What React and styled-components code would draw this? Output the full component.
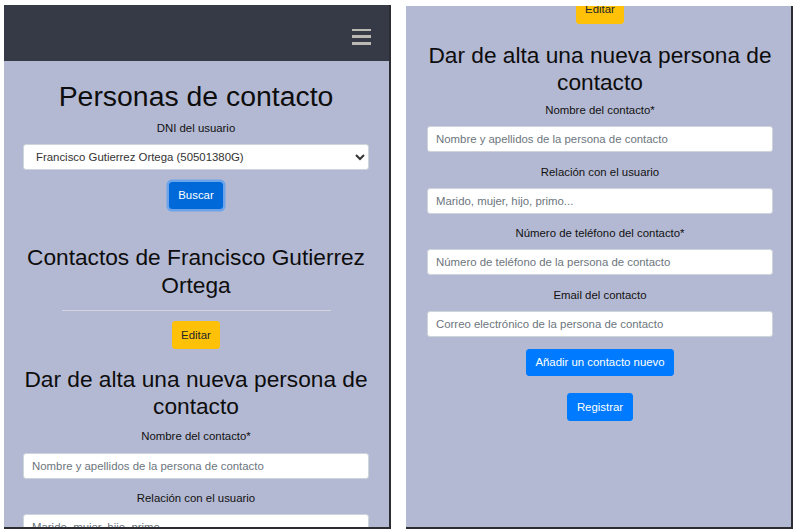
import React from "react";
import styled, { createGlobalStyle } from "styled-components";

const GlobalStyle = createGlobalStyle`
  body {
    margin: 0;
    background: #fff;
    font-family: "Liberation Sans", Arial, sans-serif;
    color: #111;
  }
`;

const Page = styled.div`
  display: flex;
  align-items: flex-start;
  gap: 15px;
  padding: 5px 0 0 4px;
`;

const Screen = styled.div`
  box-sizing: border-box;
  width: 387px;
  height: ${(p) => p.$h}px;
  margin-top: ${(p) => p.$top || 0}px;
  background: #b4b9d3;
  border-right: 2px solid #2c2d33;
  border-bottom: 2px solid #2c2d33;
  overflow: hidden;
`;

// ========== barra superior ==========

const Navbar = styled.nav`
  height: 56px;
  background: #363a46;
  display: flex;
  justify-content: flex-end;
  align-items: flex-start;
  padding: 23.5px 18px 0 0;
  box-sizing: border-box;
`;

const Toggler = styled.button`
  border: 0;
  padding: 0;
  background: transparent;
  display: flex;
  flex-direction: column;
  gap: 4.3px;
`;

const Bar = styled.span`
  display: block;
  width: 19px;
  height: 2.7px;
  background: #bab9b2;
`;

// ========== contenido ==========

const Content = styled.div`
  display: flex;
  flex-direction: column;
  align-items: stretch;
  text-align: center;
  padding: 0 ${(p) => p.$right}px 0 ${(p) => p.$left}px;
`;

const Title = styled.h1`
  margin: 17.5px 0 0;
  font-size: 28.4px;
  font-weight: 400;
  line-height: 1.2;
  color: #0d0d0d;
`;

const Heading = styled.h2`
  margin: ${(p) => p.$mt}px 0 ${(p) => p.$mb}px;
  font-size: 22.7px;
  font-weight: 400;
  line-height: 1.2;
  color: #0d0d0d;
`;

const Label = styled.label`
  display: block;
  margin: ${(p) => p.$mt || 0}px 0 7px;
  font-size: 11.4px;
  line-height: 17.1px;
  color: #111;
`;

const FormGroup = styled.div`
  display: flex;
  flex-direction: column;
  margin-bottom: 11.5px;
`;

const Field = styled.input`
  box-sizing: border-box;
  width: 100%;
  height: 26px;
  padding: 0 8px;
  border: 1px solid #ced4da;
  border-radius: 3px;
  background: #fff;
  font-family: "Liberation Sans", Arial, sans-serif;
  font-size: 11.4px;
  color: #495057;
  outline: none;

  &::placeholder {
    color: #6c757d;
  }
`;

const Select = styled.select`
  box-sizing: border-box;
  width: 100%;
  height: 26px;
  padding: 0 8px;
  border: 1px solid #ced4da;
  border-radius: 3px;
  background: #fff;
  font-family: "Liberation Sans", Arial, sans-serif;
  font-size: 11.4px;
  color: #333;
`;

const colors = {
  primary: { bg: "#007bff", fg: "#fff" },
  active: { bg: "#0069d9", fg: "#fff" },
  warning: { bg: "#ffc107", fg: "#212529" },
};

const Button = styled.button`
  align-self: center;
  width: fit-content;
  margin-top: ${(p) => p.$mt}px;
  padding: 4.3px 8.5px;
  border: 1px solid ${(p) => colors[p.$variant].bg};
  border-radius: 3px;
  background: ${(p) => colors[p.$variant].bg};
  color: ${(p) => colors[p.$variant].fg};
  font-family: "Liberation Sans", Arial, sans-serif;
  font-size: 11.4px;
  line-height: 17.1px;
  box-shadow: ${(p) => (p.$focus ? "0 0 0 2.5px rgba(38, 143, 255, 0.5)" : "none")};
`;

const Divider = styled.hr`
  align-self: center;
  width: 269px;
  margin: 11.5px 0 0;
  border: 0;
  border-top: 1px solid #d3d5df;
`;

function ContactForm() {
  return (
    <>
      <FormGroup>
        <Label>Nombre del contacto*</Label>
        <Field placeholder="Nombre y apellidos de la persona de contacto" />
      </FormGroup>
      <FormGroup>
        <Label>Relación con el usuario</Label>
        <Field placeholder="Marido, mujer, hijo, primo..." />
      </FormGroup>
      <FormGroup>
        <Label>Número de teléfono del contacto*</Label>
        <Field placeholder="Número de teléfono de la persona de contacto" />
      </FormGroup>
      <FormGroup>
        <Label>Email del contacto</Label>
        <Field placeholder="Correo electrónico de la persona de contacto" />
      </FormGroup>
    </>
  );
}

export default function App() {
  return (
    <>
      <GlobalStyle />
      <Page>
        <Screen $h={524}>
          <Navbar>
            <Toggler aria-label="menu">
              <Bar />
              <Bar />
              <Bar />
            </Toggler>
          </Navbar>
          <Content $left={19} $right={20}>
            <Title>Personas de contacto</Title>
            <Label $mt={7}>DNI del usuario</Label>
            <Select defaultValue="50501380G">
              <option value="50501380G">Francisco Gutierrez Ortega (50501380G)</option>
            </Select>
            <Button $variant="active" $focus $mt={12}>Buscar</Button>
            <Heading $mt={35} $mb={0}>Contactos de Francisco Gutierrez Ortega</Heading>
            <Divider />
            <Button $variant="warning" $mt={10}>Editar</Button>
            <Heading $mt={17} $mb={8}>Dar de alta una nueva persona de contacto</Heading>
            <ContactForm />
          </Content>
        </Screen>

        <Screen $h={523} $top={1}>
          <Content $left={21} $right={18}>
            <Button $variant="warning" $mt={-10}>Editar</Button>
            <Heading $mt={18} $mb={6}>Dar de alta una nueva persona de contacto</Heading>
            <ContactForm />
            <Button $variant="primary" $mt={0}>Añadir un contacto nuevo</Button>
            <Button $variant="primary" $mt={17}>Registrar</Button>
          </Content>
        </Screen>
      </Page>
    </>
  );
}
